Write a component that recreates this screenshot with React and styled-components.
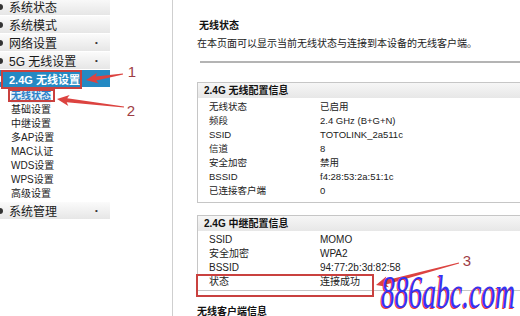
import React from "react";
import styled, { createGlobalStyle } from "styled-components";

const GlobalStyle = createGlobalStyle`
  html, body {
    margin: 0;
    padding: 0;
    background: #fff;
    overflow: hidden;
  }
  body {
    font-family: "Liberation Sans", "Noto Sans CJK SC", sans-serif;
    color: #222;
  }
`;

const Page = styled.div`
  position: relative;
  display: flex;
  width: 520px;
  height: 316px;
  overflow: hidden;
`;

const Sidebar = styled.div`
  width: 172px;
  flex-shrink: 0;
  border-right: 1px solid #cfcfcf;
`;

const Menu = styled.div`
  width: 110px;
  margin-top: -2px;
`;

const MenuItem = styled.div`
  position: relative;
  display: flex;
  align-items: center;
  height: 17px;
  padding-left: 9px;
  font-size: ${(p) => (p.$active ? 11 : 12)}px;
  font-weight: ${(p) => (p.$active ? 700 : 400)};
  color: ${(p) => (p.$active ? "#fff" : "#1a1a1a")};
  background: ${(p) =>
    p.$active ? "#2489c3" : "linear-gradient(#fbfbfb, #e6e6e6)"};
  border-bottom: 1px solid #fff;
  white-space: nowrap;

  &::before {
    content: "";
    position: absolute;
    left: -3px;
    top: 6px;
    width: 6px;
    height: 6px;
    border-radius: 50%;
    background: ${(p) => (p.$active ? "#fff" : "#333")};
  }

  &::after {
    content: ${(p) => (p.$more ? '"•"' : "none")};
    position: absolute;
    left: 95px;
    font-size: 8px;
    color: #333;
  }
`;

const SubMenu = styled.div`
  display: flex;
  flex-direction: column;
  padding: 1px 0 0 11px;
  margin-bottom: 1px;
`;

const SubItem = styled.div`
  align-self: flex-start;
  height: 14px;
  line-height: 14px;
  font-size: 10px;
  white-space: nowrap;
  color: ${(p) => (p.$current ? "#2c7fc6" : "#222")};
  background: ${(p) => (p.$current ? "#e3f0fa" : "transparent")};
  text-decoration: ${(p) => (p.$current ? "underline" : "none")};
  font-weight: ${(p) => (p.$current ? 700 : 400)};
`;

const Content = styled.div`
  flex: 1;
  min-width: 0;
  padding: 19px 0 0 24px;
`;

const Title = styled.div`
  font-size: 10px;
  font-weight: 700;
  line-height: 14px;
  padding-left: 2px;
  color: #111;
`;

const Desc = styled.div`
  margin-top: 4px;
  font-size: 10px;
  line-height: 14px;
  white-space: nowrap;
  color: #222;
`;

const Rule = styled.div`
  margin: 10px 0 0 3px;
  border-top: 2px solid #b4b4b4;
`;

const Panel = styled.div`
  margin-top: ${(p) => p.$gap}px;
  margin-right: -20px;
  border: 1px solid #c6c6c6;
`;

const PanelHead = styled.div`
  height: 15px;
  line-height: 15px;
  padding-left: 6px;
  font-size: 10px;
  font-weight: 700;
  color: #111;
  background: linear-gradient(#f6f6f6, #e7e7e7);
  white-space: nowrap;
`;

const PanelBody = styled.div`
  padding: 2px 0 ${(p) => p.$bottom}px 11px;
`;

const Row = styled.div`
  display: grid;
  grid-template-columns: 111px 1fr;
  height: 14px;
  line-height: 14px;
  font-size: ${(p) => p.$size}px;
  color: #222;
  white-space: nowrap;
`;

const SectionTitle = styled.div`
  margin-top: 15px;
  font-size: 10px;
  font-weight: 700;
  line-height: 12px;
  color: #111;
`;

const Overlay = styled.svg`
  position: absolute;
  left: 0;
  top: 0;
  pointer-events: none;
`;

const Watermark = styled.span`
  position: absolute;
  left: 381px;
  top: 275px;
  font-family: "Liberation Serif", serif;
  font-style: italic;
  font-size: 46px;
  line-height: 36px;
  color: #3434f2;
  text-shadow: -1.5px 0.5px 0 #ec3b3b;
  transform: scaleX(0.6);
  transform-origin: left top;
  white-space: nowrap;
`;

const menuTop = [
  { label: "系统状态" },
  { label: "系统模式" },
  { label: "网络设置", more: true },
  { label: "5G 无线设置", more: true },
  { label: "2.4G 无线设置", active: true },
];

const subItems = [
  "无线状态",
  "基础设置",
  "中继设置",
  "多AP设置",
  "MAC认证",
  "WDS设置",
  "WPS设置",
  "高级设置",
];

const wlanRows = [
  ["无线状态", "已启用"],
  ["频段", "2.4 GHz (B+G+N)"],
  ["SSID", "TOTOLINK_2a511c"],
  ["信道", "8"],
  ["安全加密", "禁用"],
  ["BSSID", "f4:28:53:2a:51:1c"],
  ["已连接客户端", "0"],
];

const repeaterRows = [
  ["SSID", "MOMO"],
  ["安全加密", "WPA2"],
  ["BSSID", "94:77:2b:3d:82:58"],
  ["状态", "连接成功"],
];

// tapered annotation arrow from tail to tip
function arrowPoints([tx, ty], [px, py]) {
  const len = Math.hypot(px - tx, py - ty);
  const dx = (px - tx) / len;
  const dy = (py - ty) / len;
  const nx = -dy;
  const ny = dx;
  const head = 10;
  const bx = px - dx * head;
  const by = py - dy * head;
  const pt = (x, y) => `${x.toFixed(1)},${y.toFixed(1)}`;
  return [
    pt(tx + nx * 0.5, ty + ny * 0.5),
    pt(bx + nx * 2, by + ny * 2),
    pt(bx - dx * 2 + nx * 5.5, by - dy * 2 + ny * 5.5),
    pt(px, py),
    pt(bx - dx * 2 - nx * 5.5, by - dy * 2 - ny * 5.5),
    pt(bx - nx * 2, by - ny * 2),
    pt(tx - nx * 0.5, ty - ny * 0.5),
  ].join(" ");
}

const arrows = [
  [[123, 74], [86, 80]],
  [[124, 107], [57, 99]],
  [[459, 263], [376, 285]],
];

const boxes = [
  [2, 71, 79, 17],
  [9, 90, 45, 11],
  [197, 275, 176, 21],
];

const labels = [
  ["1", 132, 77],
  ["2", 131, 116],
  ["3", 467, 266],
];

function Annotations() {
  return (
    <Overlay width="520" height="316" viewBox="0 0 520 316">
      {boxes.map(([x, y, w, h], i) => (
        <rect
          key={i}
          x={x}
          y={y}
          width={w}
          height={h}
          fill="none"
          stroke="#c9413f"
          strokeWidth="2"
        />
      ))}
      {arrows.map(([t, p], i) => (
        <polygon key={i} points={arrowPoints(t, p)} fill="#dc4340" />
      ))}
      {labels.map(([n, x, y]) => (
        <text
          key={n}
          x={x}
          y={y}
          textAnchor="middle"
          fontFamily="Liberation Sans, sans-serif"
          fontSize="15"
          fill="#9e3d44"
        >
          {n}
        </text>
      ))}
    </Overlay>
  );
}

export default function App() {
  return (
    <>
      <GlobalStyle />
      <Page>
        <Sidebar>
          <Menu>
            {menuTop.map((m) => (
              <MenuItem key={m.label} $active={m.active} $more={m.more}>
                {m.label}
              </MenuItem>
            ))}
            <SubMenu>
              {subItems.map((s, i) => (
                <SubItem key={s} $current={i === 0}>
                  {s}
                </SubItem>
              ))}
            </SubMenu>
            <MenuItem $more>系统管理</MenuItem>
          </Menu>
        </Sidebar>
        <Content>
          <Title>无线状态</Title>
          <Desc>在本页面可以显示当前无线状态与连接到本设备的无线客户端。</Desc>
          <Rule />
          <Panel $gap={19}>
            <PanelHead>2.4G 无线配置信息</PanelHead>
            <PanelBody $bottom={4}>
              {wlanRows.map(([k, v]) => (
                <Row key={k} $size={9.5}>
                  <span>{k}</span>
                  <span>{v}</span>
                </Row>
              ))}
            </PanelBody>
          </Panel>
          <Panel $gap={12}>
            <PanelHead>2.4G 中继配置信息</PanelHead>
            <PanelBody $bottom={1}>
              {repeaterRows.map(([k, v]) => (
                <Row key={k} $size={10}>
                  <span>{k}</span>
                  <span>{v}</span>
                </Row>
              ))}
            </PanelBody>
          </Panel>
          <SectionTitle>无线客户端信息</SectionTitle>
        </Content>
        <Annotations />
        <Watermark>886abc.com</Watermark>
      </Page>
    </>
  );
}
